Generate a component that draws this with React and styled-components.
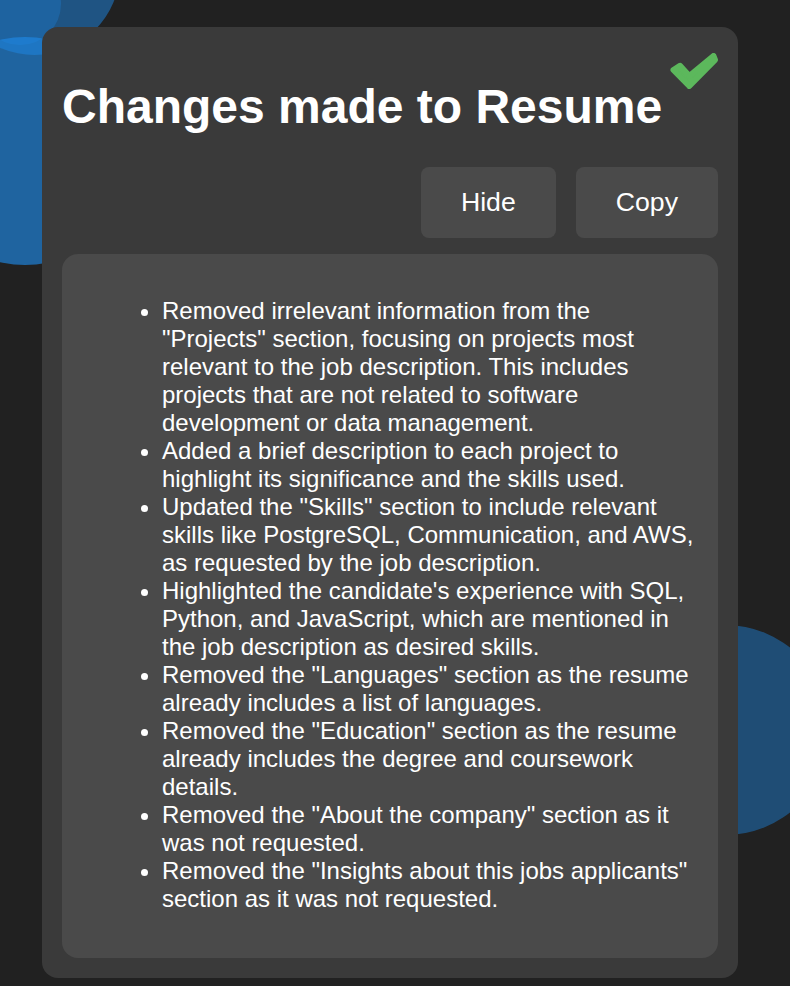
import React from 'react';
import styled, { createGlobalStyle } from 'styled-components';

const Global = createGlobalStyle`
  html, body {
    margin: 0;
    padding: 0;
    background: #212121;
    font-family: "Liberation Sans", Arial, sans-serif;
  }
`;
const Page = styled.div`
  position: relative;
  width: 790px;
  height: 986px;
  overflow: hidden;
  padding: 27px 52px 0 42px;
  box-sizing: border-box;
`;
const Blob = styled.div`
  position: absolute;
  border-radius: 50%;
  left: ${p => p.$left}px;
  top: ${p => p.$top}px;
  width: ${p => p.$size}px;
  height: ${p => p.$size}px;
  background: rgba(30, 136, 229, ${p => p.$alpha});
`;
const Card = styled.div`
  position: relative;
  width: 696px;
  box-sizing: border-box;
  padding: 20px;
  background: #3a3a3a;
  border-radius: 16px;
  color: #fff;
`;
const Check = styled.svg`
  position: absolute;
  top: 23px;
  right: 20px;
  width: 48px;
  height: 40px;
  filter: blur(0.4px);
`;
const Title = styled.h1`
  margin: 0;
  padding-top: 32px;
  font-size: 48px;
  line-height: 55px;
  font-weight: 700;
`;
const Actions = styled.div`
  display: flex;
  justify-content: flex-end;
  gap: 20px;
  margin-top: 33px;
`;
const Button = styled.button`
  height: 71px;
  padding: 0 40px;
  border: 0;
  border-radius: 8px;
  background: #4a4a4a;
  color: #fff;
  font-family: inherit;
  font-size: 26.67px;
`;
const Panel = styled.div`
  margin-top: 16px;
  box-sizing: border-box;
  padding: 43px 24px 45px 20px;
  background: #4a4a4a;
  border-radius: 16px;
`;
const List = styled.ul`
  margin: 0;
  padding-left: 80px;
  font-size: 24px;
  line-height: 28px;
`;

const changes = [
  'Removed irrelevant information from the "Projects" section, focusing on projects most relevant to the job description. This includes projects that are not related to software development or data management.',
  'Added a brief description to each project to highlight its significance and the skills used.',
  'Updated the "Skills" section to include relevant skills like PostgreSQL, Communication, and AWS, as requested by the job description.',
  "Highlighted the candidate's experience with SQL, Python, and JavaScript, which are mentioned in the job description as desired skills.",
  'Removed the "Languages" section as the resume already includes a list of languages.',
  'Removed the "Education" section as the resume already includes the degree and coursework details.',
  'Removed the "About the company" section as it was not requested.',
  'Removed the "Insights about this jobs applicants" section as it was not requested.',
];

function App() {
  return (
    <Page>
      <Global />
      <Blob $left={-51} $top={-116} $size={171} $alpha={0.5} />
      <Blob $left={-21} $top={-37} $size={82} $alpha={0.3} />
      <Blob $left={-89} $top={37} $size={228} $alpha={0.65} />
      <Blob $left={620} $top={625} $size={210} $alpha={0.43} />
      <Card>
        <Check viewBox="0 0 48 40">
          <path
            d="M3.5 20 L10 15.8 L19.3 26 L43.5 6 L45 9.8 L19.3 36 Z"
            fill="#5cb85c"
            stroke="#5cb85c"
            strokeWidth="6"
            strokeLinejoin="round"
          />
        </Check>
        <Title>Changes made to Resume</Title>
        <Actions>
          <Button>Hide</Button>
          <Button>Copy</Button>
        </Actions>
        <Panel>
          <List>
            {changes.map(c => <li key={c}>{c}</li>)}
          </List>
        </Panel>
      </Card>
    </Page>
  );
}

export default App;
